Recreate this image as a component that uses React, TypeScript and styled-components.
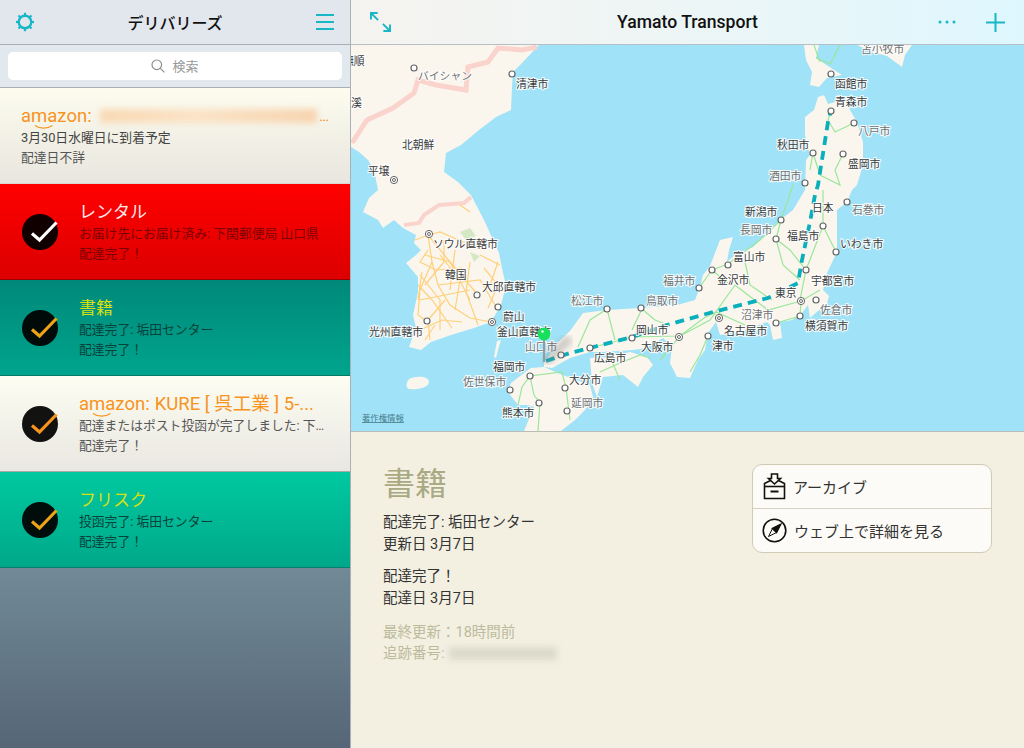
import React from 'react'
import styled, { createGlobalStyle } from 'styled-components'

const TEAL = '#17b7c7'
const FONT = `Roboto, 'Noto Sans CJK JP', sans-serif`

const GlobalStyle = createGlobalStyle`
  html, body { margin: 0; padding: 0; background: #f3f0e2; }
  body { font-family: ${FONT}; }
`

const Screen = styled.div`
  display: flex;
  width: 1024px;
  height: 748px;
  overflow: hidden;
`
const Sidebar = styled.aside`
  display: flex;
  flex-direction: column;
  width: 350px;
  flex: none;
  border-right: 1px solid #aab0b4;
`
const SideHeader = styled.header`
  display: flex;
  align-items: center;
  justify-content: space-between;
  height: 44px;
  padding: 0 16px;
  background: #e1e7ec;
  border-bottom: 1px solid #a9aeb2;
`
const SideTitle = styled.h1`
  margin: 0;
  font-size: 16px;
  font-weight: 500;
  color: #111;
`
const SearchArea = styled.div`
  height: 43px;
  padding: 7px 8px;
  box-sizing: border-box;
  background: #e2e9ee;
  border-bottom: 1px solid #a9aeb2;
`
const SearchBox = styled.div`
  display: flex;
  align-items: center;
  justify-content: center;
  gap: 7px;
  height: 27px;
  padding-bottom: 1px;
  border-radius: 5px;
  background: #fff;
  color: #9a9a9a;
  font-size: 13px;
`
const Card = styled.div<{ $from: string; $to: string; $edge: string }>`
  display: flex;
  align-items: center;
  flex: none;
  height: 96px;
  box-sizing: border-box;
  padding: 0 20px 0 22px;
  gap: 21px;
  background: linear-gradient(${p => p.$from}, ${p => p.$to});
  border-bottom: 1px solid ${p => p.$edge};
`
const NoteCard = styled(Card)`
  padding-left: 21px;
`
const Check = styled.div`
  display: flex;
  align-items: center;
  justify-content: center;
  flex: none;
  width: 36px;
  height: 36px;
  border-radius: 50%;
  background: rgba(0, 0, 0, 0.93);
`
const CardBody = styled.div`
  min-width: 0;
  flex: 1;
`
const CardTitle = styled.div<{ $color: string }>`
  display: flex;
  align-items: center;
  height: 24px;
  font-size: 17px;
  line-height: 24px;
  color: ${p => p.$color};
`
const AmazonTitle = styled(CardTitle)`
  font-size: 18.5px;
  white-space: nowrap;
`
const AmazonWord = styled.span`
  position: relative;
  display: inline-block;
  margin-right: 5px;
`
const Smile = styled.svg`
  position: absolute;
  left: 13px;
  top: 20px;
`
const Redacted = styled.span`
  flex: 1;
  height: 14px;
  margin: 0 2px 0 3px;
  background: linear-gradient(90deg, #f9d9b4, #fbe3c6 45%, #f7d3ae);
  filter: blur(3px);
`
const MoreDots = styled.span`
  font-size: 15px;
  letter-spacing: 1px;
`
const Sub = styled.div<{ $color: string }>`
  font-size: 12.8px;
  line-height: 20px;
  white-space: nowrap;
  overflow: hidden;
  text-overflow: ellipsis;
  color: ${p => p.$color};
`
const SideFill = styled.div`
  flex: 1;
  background: linear-gradient(#718a96, #566677);
`
const Main = styled.main`
  display: flex;
  flex-direction: column;
  flex: 1;
  min-width: 0;
`
const MainHeader = styled.header`
  display: grid;
  grid-template-columns: 1fr auto 1fr;
  align-items: center;
  height: 44px;
  flex: none;
  padding: 0 19px;
  background: linear-gradient(90deg, #f5f3f0, #eef5f5 45%, #def7fe);
  border-bottom: 1px solid #b4c0c4;
`
const MainTitle = styled.h2`
  margin: 0;
  font-size: 17.6px;
  font-weight: 500;
  color: #111;
`
const Actions = styled.div`
  display: flex;
  align-items: center;
  justify-content: flex-end;
  gap: 30px;
`
const MapFrame = styled.div`
  flex: none;
  height: 386px;
  background: #a0e2f7;
  border-bottom: 1px solid #b9bdb5;
`
const MapSvg = styled.svg`
  display: block;
`
const Place = styled.text<{ $dim?: boolean }>`
  font-family: 'Noto Sans CJK JP', sans-serif;
  font-size: 10.8px;
  fill: ${p => (p.$dim ? '#6f7170' : '#3a3a3a')};
  stroke: rgba(255, 255, 255, 0.85);
  stroke-width: 2.2px;
  paint-order: stroke;
`
const Legal = styled.text`
  font-family: 'Noto Sans CJK JP', sans-serif;
  font-size: 8.4px;
  fill: #4a7f90;
  text-decoration: underline;
`
const Detail = styled.section`
  display: flex;
  justify-content: space-between;
  flex: 1;
  padding: 32px 32px 0;
  background: #f3f0e2;
`
const Info = styled.div`
  color: #333;
  font-size: 14.5px;
  line-height: 22px;
`
const InfoTitle = styled.div`
  height: 41px;
  margin-bottom: 7px;
  font-size: 32px;
  line-height: 40px;
  color: #a9a983;
`
const Para = styled.p`
  margin: 0 0 10px;
  color: #333;
`
const MutedPara = styled(Para)`
  margin-top: 12px;
  line-height: 21px;
  color: #bcbb9c;
`
const TrackRow = styled.span`
  display: flex;
  align-items: center;
`
const TrackBlur = styled.span`
  width: 108px;
  height: 13px;
  margin-left: 4px;
  background: #dbdacb;
  filter: blur(3px);
`
const ActionBox = styled.div`
  align-self: flex-start;
  width: 240px;
  box-sizing: border-box;
  border: 1px solid #cfcbb6;
  border-radius: 10px;
  background: #fcfbf7;
`
const ActionRow = styled.div<{ $line?: boolean }>`
  display: flex;
  align-items: center;
  gap: 7px;
  height: 43px;
  padding-left: 9px;
  font-size: 15px;
  color: #333;
  border-bottom: ${p => (p.$line ? '1px solid #d5d2c2' : 'none')};
`
const TickSvg = styled.svg`
  margin-left: 8px;
  flex: none;
`

const GearIcon = () => (
  <svg width="18" height="20" viewBox="0 0 18 20" fill="none">
    <circle cx="9" cy="10" r="6.3" stroke={TEAL} strokeWidth="2.4" />
    {[0, 45, 90, 135, 180, 225, 270, 315].map(a => (
      <path key={a} d="M9 0.8v2.6" stroke={TEAL} strokeWidth="2.2" transform={`rotate(${a} 9 10)`} />
    ))}
  </svg>
)
const MenuIcon = () => (
  <svg width="18" height="16" viewBox="0 0 18 16" stroke={TEAL} strokeWidth="2">
    <path d="M0 1h18M0 8h18M0 15h18" />
  </svg>
)
const SearchIcon = () => (
  <svg width="14" height="14" viewBox="0 0 14 14" fill="none" stroke="#8d8d8d" strokeWidth="1.2">
    <circle cx="5.8" cy="5.8" r="4.8" />
    <path d="M9.3 9.3L13.4 13.4" />
  </svg>
)
const TickIcon = ({ color }: { color: string }) => (
  <TickSvg width="28" height="24" viewBox="0 0 28 24" fill="none" stroke={color} strokeWidth="3.2">
    <path d="M2 13.5L9.5 20L26.5 2.5" />
  </TickSvg>
)
const ExpandIcon = () => (
  <svg width="21" height="20" viewBox="0 0 22 21" fill="none" stroke={TEAL} strokeWidth="2">
    <path d="M1 8V1h7M1 1l7.5 7.5M21 13v7h-7M21 20l-7.5-7.5" />
  </svg>
)
const DotsIcon = () => (
  <svg width="18" height="4" viewBox="0 0 18 4" fill={TEAL}>
    <circle cx="2" cy="2" r="1.5" />
    <circle cx="9" cy="2" r="1.5" />
    <circle cx="16" cy="2" r="1.5" />
  </svg>
)
const PlusIcon = () => (
  <svg width="19" height="19" viewBox="0 0 19 19" stroke={TEAL} strokeWidth="2">
    <path d="M9.5 0v19M0 9.5h19" />
  </svg>
)
const ArchiveIcon = () => (
  <svg width="24" height="27" viewBox="0 0 24 27" fill="none" stroke="#111" strokeWidth="1.6">
    <path d="M8.5 7.5L2.5 10.5V25.5H22.5V10.5L16.5 7.5" />
    <path d="M2.5 13.5H22.5" />
    <path d="M9.5 1H15.5V5.5H18.5L12.5 11L6.5 5.5H9.5Z" fill="#fcfbf7" />
    <path d="M8.5 18.5H16.5" strokeWidth="2" />
  </svg>
)
const CompassIcon = () => (
  <svg width="25" height="25" viewBox="0 0 25 25" fill="none" stroke="#111" strokeWidth="1.6">
    <circle cx="12.5" cy="12.5" r="11.3" />
    <path d="M18.5 6.5L10.5 10.5L6.5 18.5L14.5 14.5Z" strokeWidth="1" />
    <path d="M18.5 6.5L10.5 10.5L14.5 14.5Z" fill="#111" />
  </svg>
)

const LAND = [
  'M351 45L539 45L522 63L513 72L512 87L511 110L496 117L479 130L461 145L446 153L444 172L458 182L471 195L484 220L499 253L503 273L506 285L501 305L491 322L474 328L451 335L431 342L421 350L409 347L416 328L413 315L418 292L418 277L406 263L416 255L421 250L414 243L416 235L403 228L394 220L383 228L378 220L363 212L369 198L378 190L374 170L368 160L359 152L351 147Z',
  'M544 363L558 342L570 331L583 313L607 310L640 308L677 305L695 300L700 287L703 275L710 266L715 253L720 240L733 237L729 250L727 262L736 254L753 247L767 233L780 220L793 210L805 190L806 160L810 155L805 135L805 117L814 110L818 97L824 95L828 104L835 102L837 95L843 97L850 110L857 122L863 142L863 165L857 185L852 190L847 202L837 210L837 233L837 252L827 273L823 290L829 296L827 303L810 318L808 305L802 313L792 320L780 322L782 338L773 340L770 325L767 322L740 332L720 335L716 322L708 333L705 350L698 360L690 378L677 377L670 363L672 347L663 338L647 348L633 350L603 352L590 352L570 358L552 368L544 367Z',
  'M531 368L544 367L560 374L590 385L593 397L585 410L575 420L561 431L524 431L534 407L528 405L518 405L508 392L511 383L524 373Z',
  'M590 358L610 357L630 352L647 357L653 365L643 377L638 387L623 375L603 377L597 397L592 383Z',
  'M804 45L806 60L812 72L810 85L819 87L827 78L842 75L831 68L816 58L819 45Z',
  'M857 45L872 52L887 56L902 67L905 55L912 45Z',
  'M411 378C420 376 428 376 429 382C429 388 416 390 409 389C405 388 406 380 411 378Z',
  'M497 341L501 340L498 350L496 358L494 357Z',
]
const KOREA_ROADS = [
  'M428 235L432 262L438 285L450 305L470 318L491 322',
  'M428 235L450 262L478 295',
  'M428 235L415 240M428 235L440 232L470 245L482 250',
  'M432 262L420 290L418 315L428 322',
  'M438 285L480 280L495 305',
  'M425 255L450 262L470 300M460 205L470 212M420 300L470 290M445 300L428 320L430 340',
  'M420 275L440 300L440 330M455 250L450 290M480 255L500 265',
  'M418 285L432 300L452 328M470 262L466 292L478 325M428 250L420 262L436 270L462 268',
  'M444 240L444 262L425 285M484 268L498 285L488 308M420 330L442 320L462 322M498 262L490 285',
  'M422 272L418 300M440 255L460 280L455 310M425 340L435 325',
]
const JAPAN_ROADS = [
  'M530 376L534 395L540 403L538 431',
  'M518 405L522 387L530 376L562 372L566 388L570 420',
  'M578 347L590 320L607 309L615 340M632 330L642 309L655 320L668 325',
  'M590 348L632 337L680 336L704 318L716 312L745 325',
  'M680 336L710 320L735 285L748 295L768 310L801 301',
  'M699 288L712 270L728 264L760 240L781 220L793 185',
  'M800 300L806 270L823 226L836 252M806 270L790 250L776 239L781 220',
  'M708 336L700 355L690 372M660 360L680 336',
  'M600 372L620 363L640 355L650 358M610 357L620 380',
  'M776 323L800 316L801 301L820 290',
  'M831 111L828 120L835 132L854 123M843 154L835 170L840 185L820 175L813 153L810 170',
  'M823 190L823 226M816 58L830 64L840 45M814 45L820 62',
  'M745 262L750 285L772 300M776 239L783 265L800 280M712 270L730 285',
]
const CITIES: [number, number][] = [
  [414, 68], [512, 74], [477, 295], [498, 307], [427, 321], [530, 376], [510, 390], [539, 403], [565, 388], [567, 411],
  [561, 355], [590, 348], [632, 338], [607, 309], [641, 308], [699, 288], [712, 270], [728, 265], [708, 336], [776, 323],
  [800, 316], [816, 300], [806, 270], [836, 252], [823, 226], [776, 239], [781, 220], [847, 202], [805, 183], [843, 154],
  [813, 153], [854, 123], [831, 111], [831, 74],
]
const CAPITALS: [number, number][] = [[394, 180], [429, 234], [492, 322], [679, 337], [719, 318], [801, 301]]
const PLACES: [string, number, number, boolean?][] = [
  ['苫小牧市', 861, 53, true], ['撫順', 343, 65], ['バイシャン', 418, 80, true], ['清津市', 516, 88], ['溪', 351, 107],
  ['北朝鮮', 402, 149], ['平壌', 368, 175], ['函館市', 835, 88], ['青森市', 835, 106], ['八戸市', 858, 135, true],
  ['秋田市', 777, 149], ['盛岡市', 848, 168], ['酒田市', 769, 180, true], ['新潟市', 745, 216], ['日本', 812, 212],
  ['石巻市', 852, 214, true], ['長岡市', 740, 234, true], ['福島市', 787, 240], ['いわき市', 840, 248], ['ソウル直轄市', 433, 248],
  ['富山市', 733, 261], ['韓国', 445, 279], ['福井市', 663, 285, true], ['金沢市', 717, 284], ['宇都宮市', 811, 285],
  ['大邱直轄市', 482, 291], ['東京', 775, 297], ['松江市', 571, 305, true], ['鳥取市', 646, 305, true], ['佐倉市', 820, 314, true],
  ['蔚山', 503, 321], ['沼津市', 741, 319, true], ['横須賀市', 805, 330], ['光州直轄市', 369, 336], ['釜山直轄市', 497, 336],
  ['岡山市', 636, 334], ['名古屋市', 724, 335], ['津市', 712, 350], ['山口市', 525, 351, true], ['大阪市', 641, 351],
  ['広島市', 594, 362], ['福岡市', 493, 371], ['大分市', 569, 384], ['佐世保市', 463, 386, true], ['延岡市', 571, 407, true],
  ['熊本市', 502, 417],
]

const JapanMap = () => (
  <MapSvg width="673" height="386" viewBox="351 45 673 386">
    <defs>
      <filter id="soft">
        <feGaussianBlur stdDeviation="3" />
      </filter>
    </defs>
    <g fill="#faf6ee">
      {LAND.map(d => (
        <path key={d} d={d} />
      ))}
    </g>
    <path d="M352 143L367 120L393 108L414 93L418 80L436 85L466 90L468 67L488 62L498 48L522 50L537 47" fill="none" stroke="#fbd3cd" strokeWidth="5" />
    <path d="M471 197L464 203L439 205L424 215L419 223L404 225" fill="none" stroke="#fbd3cd" strokeWidth="4" />
    <g fill="none" stroke="#ffd07a" strokeWidth="1.2">
      {KOREA_ROADS.map(d => (
        <path key={d} d={d} />
      ))}
    </g>
    <g fill="none" stroke="#9ae69a" strokeWidth="1.2">
      {JAPAN_ROADS.map(d => (
        <path key={d} d={d} />
      ))}
    </g>
    <path d="M460 232L470 228L476 236L466 240Z M470 252L480 256L474 262Z" fill="#d5e8c4" />
    <path d="M546 361L570 353L590 348L632 337L667 325L713 312L768 298L798 283L802 260L810 222L815 195L818 185L828 122L831 110" fill="none" stroke="#0bafbc" strokeWidth="3.8" strokeDasharray="9 6" />
    {CITIES.map(([x, y]) => (
      <circle key={`${x}-${y}`} cx={x} cy={y} r="3" fill="#fff" stroke="#666" strokeWidth="1.2" />
    ))}
    {CAPITALS.map(([x, y]) => (
      <g key={`${x}-${y}`} fill="none" stroke="#666">
        <circle cx={x} cy={y} r="3.6" fill="#fff" />
        <circle cx={x} cy={y} r="1.5" />
      </g>
    ))}
    {PLACES.map(([name, x, y, dim]) => (
      <Place key={name} x={x} y={y} $dim={dim}>
        {name}
      </Place>
    ))}
    <Legal x="362" y="421">著作権情報</Legal>
    <path d="M545 362L570 338" stroke="#777" strokeWidth="9" opacity="0.35" filter="url(#soft)" />
    <rect x="543" y="335" width="2" height="27" fill="#9a9a9a" />
    <circle cx="544" cy="334" r="6.5" fill="#17e05c" />
    <circle cx="542.5" cy="331.5" r="1.2" fill="#fff" />
  </MapSvg>
)

const AMAZON_ORANGE = '#f7941e'

const Amazon = () => (
  <AmazonWord>
    amazon:
    <Smile width="20" height="6" viewBox="0 0 20 6" fill="none" stroke={AMAZON_ORANGE} strokeWidth="1.3">
      <path d="M1 1.5C6 5 13 5 18.5 1.5" />
    </Smile>
  </AmazonWord>
)

export default function App() {
  return (
    <Screen>
      <GlobalStyle />
      <Sidebar>
        <SideHeader>
          <GearIcon />
          <SideTitle>デリバリーズ</SideTitle>
          <MenuIcon />
        </SideHeader>
        <SearchArea>
          <SearchBox>
            <SearchIcon />
            検索
          </SearchBox>
        </SearchArea>
        <NoteCard $from="#fdfcef" $to="#e8e6de" $edge="#d8d6ce">
          <CardBody>
            <AmazonTitle $color={AMAZON_ORANGE}>
              <Amazon />
              <Redacted />
              <MoreDots>…</MoreDots>
            </AmazonTitle>
            <Sub $color="#444">3月30日水曜日に到着予定</Sub>
            <Sub $color="#555">配達日不詳</Sub>
          </CardBody>
        </NoteCard>
        <Card $from="#ff0000" $to="#dc0000" $edge="#9c0000">
          <Check>
            <TickIcon color="#fff" />
          </Check>
          <CardBody>
            <CardTitle $color="#ffe9e9">レンタル</CardTitle>
            <Sub $color="#7d0000">お届け先にお届け済み: 下関郵便局 山口県</Sub>
            <Sub $color="#7d0000">配達完了！</Sub>
          </CardBody>
        </Card>
        <Card $from="#00897a" $to="#00a48c" $edge="#007a68">
          <Check>
            <TickIcon color="#eda414" />
          </Check>
          <CardBody>
            <CardTitle $color="#d8df12">書籍</CardTitle>
            <Sub $color="#07423b">配達完了: 垢田センター</Sub>
            <Sub $color="#07423b">配達完了！</Sub>
          </CardBody>
        </Card>
        <Card $from="#fdfdf2" $to="#e9e7e1" $edge="#a9a9a6">
          <Check>
            <TickIcon color="#f7941e" />
          </Check>
          <CardBody>
            <AmazonTitle $color={AMAZON_ORANGE}>
              <Amazon />
              KURE [ 呉工業 ] 5-...
            </AmazonTitle>
            <Sub $color="#555">配達またはポスト投函が完了しました: 下…</Sub>
            <Sub $color="#555">配達完了！</Sub>
          </CardBody>
        </Card>
        <Card $from="#00c9a0" $to="#00a88a" $edge="#007f6c">
          <Check>
            <TickIcon color="#eda414" />
          </Check>
          <CardBody>
            <CardTitle $color="#d8df12">フリスク</CardTitle>
            <Sub $color="#07423b">投函完了: 垢田センター</Sub>
            <Sub $color="#07423b">配達完了！</Sub>
          </CardBody>
        </Card>
        <SideFill />
      </Sidebar>
      <Main>
        <MainHeader>
          <ExpandIcon />
          <MainTitle>Yamato Transport</MainTitle>
          <Actions>
            <DotsIcon />
            <PlusIcon />
          </Actions>
        </MainHeader>
        <MapFrame>
          <JapanMap />
        </MapFrame>
        <Detail>
          <Info>
            <InfoTitle>書籍</InfoTitle>
            <Para>
              配達完了: 垢田センター
              <br />
              更新日 3月7日
            </Para>
            <Para>
              配達完了！
              <br />
              配達日 3月7日
            </Para>
            <MutedPara>
              最終更新：18時間前
              <TrackRow>
                追跡番号:
                <TrackBlur />
              </TrackRow>
            </MutedPara>
          </Info>
          <ActionBox>
            <ActionRow $line>
              <ArchiveIcon />
              アーカイブ
            </ActionRow>
            <ActionRow>
              <CompassIcon />
              ウェブ上で詳細を見る
            </ActionRow>
          </ActionBox>
        </Detail>
      </Main>
    </Screen>
  )
}
